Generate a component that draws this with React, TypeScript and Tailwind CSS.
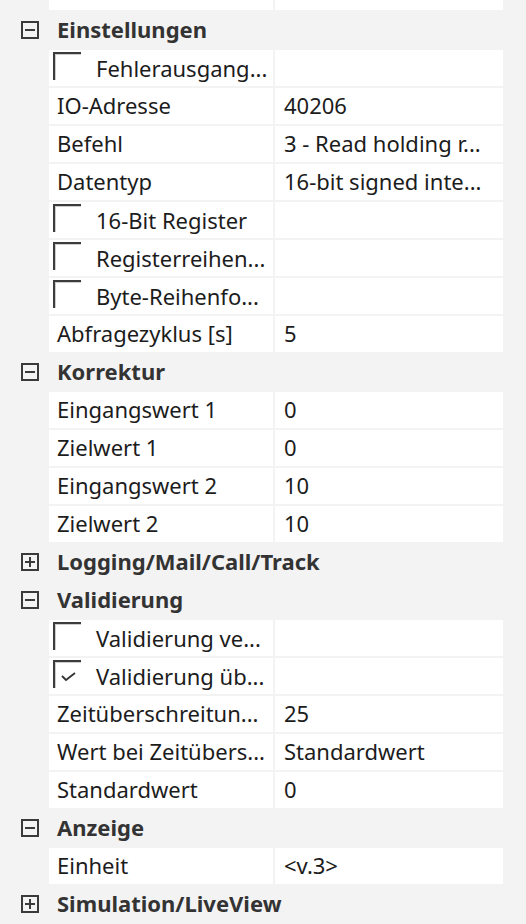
import React from "react"

type Row =
  | { kind: "head"; label: string; open: boolean }
  | { kind: "prop"; label: string; value?: string }
  | { kind: "check"; label: string; checked?: boolean }

const rows: Row[] = [
  { kind: "head", label: "Einstellungen", open: true },
  { kind: "check", label: "Fehlerausgang..." },
  { kind: "prop", label: "IO-Adresse", value: "40206" },
  { kind: "prop", label: "Befehl", value: "3 - Read holding r..." },
  { kind: "prop", label: "Datentyp", value: "16-bit signed inte..." },
  { kind: "check", label: "16-Bit Register" },
  { kind: "check", label: "Registerreihen..." },
  { kind: "check", label: "Byte-Reihenfo..." },
  { kind: "prop", label: "Abfragezyklus [s]", value: "5" },
  { kind: "head", label: "Korrektur", open: true },
  { kind: "prop", label: "Eingangswert 1", value: "0" },
  { kind: "prop", label: "Zielwert 1", value: "0" },
  { kind: "prop", label: "Eingangswert 2", value: "10" },
  { kind: "prop", label: "Zielwert 2", value: "10" },
  { kind: "head", label: "Logging/Mail/Call/Track", open: false },
  { kind: "head", label: "Validierung", open: true },
  { kind: "check", label: "Validierung ve..." },
  { kind: "check", label: "Validierung üb...", checked: true },
  { kind: "prop", label: "Zeitüberschreitun...", value: "25" },
  { kind: "prop", label: "Wert bei Zeitübers...", value: "Standardwert" },
  { kind: "prop", label: "Standardwert", value: "0" },
  { kind: "head", label: "Anzeige", open: true },
  { kind: "prop", label: "Einheit", value: "<v.3>" },
  { kind: "head", label: "Simulation/LiveView", open: false },
]

function ToggleBox({ open }: { open: boolean }) {
  return (
    <svg width="18" height="18" viewBox="0 0 18 18" className="shrink-0">
      <rect x="1" y="1" width="16" height="16" fill="none" stroke="#3a3a3a" strokeWidth="2" />
      <line x1="4" y1="9" x2="14" y2="9" stroke="#3a3a3a" strokeWidth="2" />
      {!open && <line x1="9" y1="4" x2="9" y2="14" stroke="#3a3a3a" strokeWidth="2" />}
    </svg>
  )
}

function CheckBox({ checked }: { checked?: boolean }) {
  return (
    <div className="relative w-[28px] h-[28px] border-t-2 border-l-2 border-[#3c3c3c] shrink-0">
      <div className="absolute inset-0 border-t border-l border-[#cdcdcd]" />
      {checked && (
        <svg width="16" height="10" viewBox="0 0 16 10" className="absolute left-[6px] top-[10px]">
          <polyline points="1,4 5,8 14,1" fill="none" stroke="#333" strokeWidth="1.8" />
        </svg>
      )}
    </div>
  )
}

function Cells({ left, value, pad }: { left: React.ReactNode; value?: string; pad?: boolean }) {
  return (
    <div className="flex h-[36px] gap-[2px] pl-[49px] pr-[23px]">
      <div className={`w-[224px] bg-white flex items-center pb-[2px] ${pad ? "pl-[4px]" : "pl-[8px]"}`}>{left}</div>
      <div className="flex-1 bg-white flex items-center pb-[2px] pl-[9px] text-[#1c1c1c] whitespace-nowrap">{value}</div>
    </div>
  )
}

export default function App() {
  return (
    <div
      className="w-[526px] h-[924px] overflow-hidden bg-[#f3f3f3] text-[22px] leading-none"
      style={{ fontFamily: '"Noto Sans", "Open Sans", sans-serif' }}
    >
      <div className="flex flex-col gap-[2px] -mt-[26px]">
        {/* row scrolled mostly out of view */}
        <div className="flex h-[36px] gap-[2px] pl-[49px] pr-[23px] overflow-hidden">
          <div className="w-[224px] bg-white pl-[8px] pt-[1px] text-[#1c1c1c]">Mischung</div>
          <div className="flex-1 bg-white" />
        </div>

        {rows.map((r, i) => {
          if (r.kind === "head") {
            return (
              <div key={i} className="flex h-[36px] items-center">
                <div className="w-[57px] pl-[21px]">
                  <ToggleBox open={r.open} />
                </div>
                <span className="font-bold text-[#333333] -mt-[3px]">{r.label}</span>
              </div>
            )
          }
          if (r.kind === "check") {
            return (
              <Cells
                key={i}
                pad
                left={
                  <div className="flex items-start h-full pt-[2px] w-full">
                    <CheckBox checked={r.checked} />
                    <span className="ml-[15px] self-center -mt-[1px] text-[#1c1c1c] whitespace-nowrap">{r.label}</span>
                  </div>
                }
              />
            )
          }
          return (
            <Cells key={i} left={<span className="text-[#1c1c1c] whitespace-nowrap">{r.label}</span>} value={r.value} />
          )
        })}
      </div>
    </div>
  )
}
